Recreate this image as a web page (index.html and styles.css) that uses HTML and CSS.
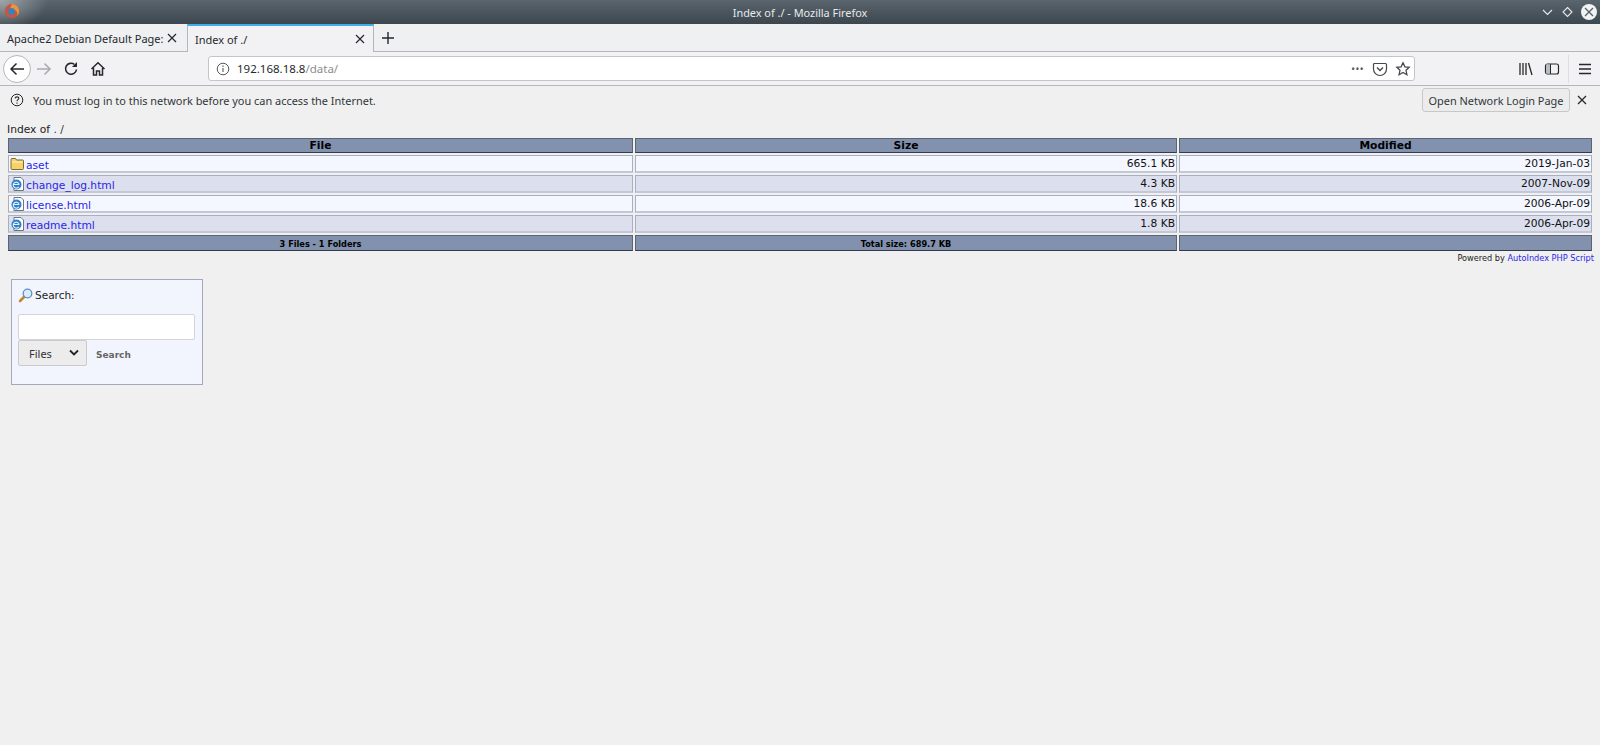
FILE: index.html
```html
<!DOCTYPE html>
<html lang="en">
<head>
  <meta charset="UTF-8" />
  <title>Index of ./ - Mozilla Firefox</title>
  <link rel="stylesheet" href="styles.css">
</head>
<body>
  <div class="titlebar">
    <svg class="ff-logo" width="16" height="16" viewBox="0 0 18 18">
      <circle cx="9" cy="9" r="8" fill="#c9553a"/>
      <path d="M9 1a8 8 0 0 1 8 8c0 2-1 4.500-2.500 5.700 1-2.400.5-5-1.500-6.500C10 7 8 7.500 7 6.500 7.500 4.500 8 2.500 9 1z" fill="#e9963a"/>
      <circle cx="8.500" cy="9.500" r="3.800" fill="#3c7fc4"/>
    </svg>
    <span class="title-text">Index of ./ - Mozilla Firefox</span>
    <div class="win-buttons">
      <svg width="13" height="12" viewBox="0 0 13 12"><path d="M2 4l4.500 4.500L11 4" fill="none" stroke="#e8eaec" stroke-width="1.100"/></svg>
      <svg width="13" height="12" viewBox="0 0 13 12"><path d="M6.500 1.500L11 6 6.500 10.500 2 6z" fill="none" stroke="#e8eaec" stroke-width="1.100"/></svg>
      <span class="win-close">
        <svg width="16" height="16" viewBox="0 0 16 16"><path d="M4 4l8 8M12 4l-8 8" stroke="#56606a" stroke-width="1.300"/></svg>
      </span>
    </div>
  </div>

  <div class="tabstrip">
    <div class="tab">
      <span class="tab-label">Apache2 Debian Default Page:</span>
      <svg class="tab-x" width="10" height="10" viewBox="0 0 10 10"><path d="M1 1l8 8M9 1L1 9" stroke="#26292c" stroke-width="1.200"/></svg>
    </div>
    <div class="tab tab-active">
      <span class="tab-label">Index of ./</span>
      <svg class="tab-x" width="10" height="10" viewBox="0 0 10 10"><path d="M1 1l8 8M9 1L1 9" stroke="#26292c" stroke-width="1.200"/></svg>
    </div>
    <svg class="tab-new" width="14" height="14" viewBox="0 0 14 14"><path d="M7 1v12M1 7h12" stroke="#26292c" stroke-width="1.400"/></svg>
  </div>

  <div class="toolbar">
    <span class="back-btn">
      <svg width="16" height="16" viewBox="0 0 16 16"><path d="M15 8H2M7.500 2.500L2 8l5.500 5.500" fill="none" stroke="#26292c" stroke-width="1.500"/></svg>
    </span>
    <svg class="tool-icon" width="16" height="16" viewBox="0 0 16 16"><path d="M1 8h13M8.500 2.500L14 8l-5.500 5.500" fill="none" stroke="#a8abaf" stroke-width="1.500"/></svg>
    <svg class="tool-icon" width="16" height="16" viewBox="0 0 16 16"><path d="M13.500 8.500a5.500 5.500 0 1 1-2-5" fill="none" stroke="#26292c" stroke-width="1.600"/><path d="M14 1v5H9z" fill="#26292c"/></svg>
    <svg class="tool-icon" width="16" height="16" viewBox="0 0 16 16"><path d="M1.500 8L8 1.800 14.500 8M3.500 7v7h3v-4h3v4h3V7" fill="none" stroke="#26292c" stroke-width="1.500"/></svg>
    <div class="urlbar">
      <svg width="14" height="14" viewBox="0 0 14 14"><circle cx="7" cy="7" r="5.800" fill="none" stroke="#55585c"/><path d="M7 6v4M7 3.600v1.300" stroke="#55585c" stroke-width="1.100"/></svg>
      <span class="url"><span class="url-host">192.168.18.8</span>/data/</span>
      <span class="url-dots">&bull;&bull;&bull;</span>
      <svg width="16" height="16" viewBox="0 0 16 16"><path d="M2.500 2.500h11a1 1 0 0 1 1 1V8a6.500 6.500 0 0 1-13 0V3.500a1 1 0 0 1 1-1z" fill="none" stroke="#45484c" stroke-width="1.200"/><path d="M5 6.500l3 3 3-3" fill="none" stroke="#45484c" stroke-width="1.400"/></svg>
      <svg width="16" height="16" viewBox="0 0 16 16"><path d="M8 1.800l1.900 4 4.300.5-3.200 3 .9 4.400L8 11.500l-3.900 2.200.9-4.400-3.200-3 4.300-.5z" fill="none" stroke="#45484c" stroke-width="1.300"/></svg>
    </div>
    <div class="toolbar-right">
      <svg width="16" height="16" viewBox="0 0 16 16"><path d="M2 2v12M5 2v12M8 2v12M10.500 2l3.500 12" fill="none" stroke="#26292c" stroke-width="1.300"/></svg>
      <svg width="16" height="16" viewBox="0 0 16 16"><rect x="1.500" y="3" width="13" height="10" rx="2" fill="none" stroke="#26292c" stroke-width="1.200"/><path d="M2 3.500h4v9H2z" fill="#b9bcc0"/><path d="M6.500 3v10" stroke="#26292c"/></svg>
      <span class="toolbar-sep"></span>
      <svg width="16" height="16" viewBox="0 0 16 16"><path d="M2 3.500h12M2 8h12M2 12.500h12" stroke="#26292c" stroke-width="1.300"/></svg>
    </div>
  </div>

  <div class="notice">
    <svg width="14" height="14" viewBox="0 0 14 14"><circle cx="7" cy="7" r="5.800" fill="none" stroke="#26292c"/><path d="M5.200 5.400C5.300 3.300 8.900 3.400 8.800 5.400 8.700 6.700 7 6.700 7 8.300M7 9.400v1.300" fill="none" stroke="#26292c" stroke-width="1.100"/></svg>
    <span class="notice-text">You must log in to this network before you can access the Internet.</span>
    <button class="notice-btn">Open Network Login Page</button>
    <svg class="notice-x" width="10" height="10" viewBox="0 0 10 10"><path d="M1 1l8 8M9 1L1 9" stroke="#26292c" stroke-width="1.300"/></svg>
  </div>

  <div class="page">
    <div class="index-title">Index of <a href="#">.</a> <a class="dark" href="#">/</a></div>
    <table class="listing">
      <tr class="head">
        <th class="col-file">File</th>
        <th class="col-size">Size</th>
        <th class="col-mod">Modified</th>
      </tr>
      <tr class="light">
        <td class="name"><svg class="file-icon" width="15" height="14" viewBox="0 0 15 14"><path d="M1 3.500V2.500a1 1 0 0 1 1-1h3.500l1 1.500h6a1 1 0 0 1 1 1v7.500a1 1 0 0 1-1 1H2a1 1 0 0 1-1-1z" fill="#f5d36a" stroke="#7d6a32"/><path d="M2 5h11" stroke="#fdf3c4"/></svg><a href="#">aset</a></td>
        <td class="num">665.1 KB</td>
        <td class="num">2019-Jan-03</td>
      </tr>
      <tr class="dark-row">
        <td class="name"><svg class="file-icon" width="15" height="14" viewBox="0 0 15 14"><path d="M4 .5h7l2.500 2.500v10.500H4z" fill="#fff" stroke="#6c7480"/><circle cx="6.500" cy="7.500" r="5" fill="#2f7fc9"/><path d="M3.800 7.500h5.400M8.800 9.800a3 3 0 1 1 .4-2.300" fill="none" stroke="#e6f2fc" stroke-width="1.100"/></svg><a href="#">change_log.html</a></td>
        <td class="num">4.3 KB</td>
        <td class="num">2007-Nov-09</td>
      </tr>
      <tr class="light">
        <td class="name"><svg class="file-icon" width="15" height="14" viewBox="0 0 15 14"><path d="M4 .5h7l2.500 2.500v10.500H4z" fill="#fff" stroke="#6c7480"/><circle cx="6.500" cy="7.500" r="5" fill="#2f7fc9"/><path d="M3.800 7.500h5.400M8.800 9.800a3 3 0 1 1 .4-2.300" fill="none" stroke="#e6f2fc" stroke-width="1.100"/></svg><a href="#">license.html</a></td>
        <td class="num">18.6 KB</td>
        <td class="num">2006-Apr-09</td>
      </tr>
      <tr class="dark-row">
        <td class="name"><svg class="file-icon" width="15" height="14" viewBox="0 0 15 14"><path d="M4 .5h7l2.500 2.500v10.500H4z" fill="#fff" stroke="#6c7480"/><circle cx="6.500" cy="7.500" r="5" fill="#2f7fc9"/><path d="M3.800 7.500h5.400M8.800 9.800a3 3 0 1 1 .4-2.300" fill="none" stroke="#e6f2fc" stroke-width="1.100"/></svg><a href="#">readme.html</a></td>
        <td class="num">1.8 KB</td>
        <td class="num">2006-Apr-09</td>
      </tr>
      <tr class="foot">
        <th>3 Files - 1 Folders</th>
        <th>Total size: 689.7 KB</th>
        <th></th>
      </tr>
    </table>
    <div class="powered">Powered by <a href="#">AutoIndex PHP Script</a></div>

    <div class="search-box">
      <div class="search-label">
        <svg width="15" height="15" viewBox="0 0 15 15"><path d="M6.500 8.500L2 13" stroke="#c8833a" stroke-width="2.600" stroke-linecap="round"/><circle cx="9.500" cy="5.500" r="4.300" fill="#d8ecfb" stroke="#5f8fc0" stroke-width="1.300"/></svg>
        <span>Search:</span>
      </div>
      <div class="search-input"></div>
      <div class="search-row">
        <div class="search-select">
          <span>Files</span>
          <svg width="10" height="8" viewBox="0 0 10 8"><path d="M1 1.500l4 4 4-4" fill="none" stroke="#222" stroke-width="1.800"/></svg>
        </div>
        <span class="search-btn">Search</span>
      </div>
    </div>
  </div>
</body>
</html>
```

FILE: styles.css
```css
* {
  margin: 0;
  padding: 0;
  box-sizing: border-box;
}

body {
  width: 1600px;
  height: 745px;
  overflow: hidden;
  background-color: #f0f0f0;
  font-family: "Noto Sans", sans-serif;
  color: #26292c;
}

a {
  color: #2a1fe8;
  text-decoration: none;
}

/* window title */
.titlebar {
  position: relative;
  height: 24px;
  display: flex;
  align-items: center;
  justify-content: center;
  background: radial-gradient(ellipse 48px 30px at 0 0, rgba(190, 195, 198, 0.7), rgba(190, 195, 198, 0)), linear-gradient(#5a656e, #3c464e);
  color: #e8eaec;
  font-size: 10.9px;
}

.ff-logo {
  position: absolute;
  left: 4px;
  top: 3px;
}

.win-buttons {
  position: absolute;
  right: 3px;
  top: 4px;
  display: flex;
  align-items: center;
  gap: 7px;
}

.win-close {
  width: 16px;
  height: 16px;
  border-radius: 50%;
  background-color: #f1f2f3;
  display: flex;
}

/* tabs */
.tabstrip {
  height: 28px;
  display: flex;
  align-items: stretch;
  background-color: #eff0f2;
  border-bottom: 1px solid #b4b6b9;
  font-size: 11px;
}

.tab {
  width: 187px;
  display: flex;
  align-items: center;
  justify-content: space-between;
  padding: 1px 10px 0 7px;
}

.tab-label {
  white-space: nowrap;
}

.tab-active {
  background-color: #f2f2f4;
  border-top: 2px solid #3daee9;
  border-left: 1px solid #b4b6b9;
  border-right: 1px solid #b4b6b9;
  margin-bottom: -1px;
  padding: 0 8px 0 7px;
}

.tab-x {
  flex-shrink: 0;
}

.tab-new {
  align-self: center;
  margin-left: 7px;
}

/* navigation */
.toolbar {
  height: 34px;
  display: flex;
  align-items: center;
  padding: 0 0 0 3px;
  background-color: #f2f2f4;
  border-bottom: 1px solid #b4b6b9;
}

.back-btn {
  width: 28px;
  height: 28px;
  border-radius: 50%;
  border: 1px solid #b4b6b9;
  background-color: #fff;
  display: flex;
  align-items: center;
  justify-content: center;
  margin-right: 5px;
}

.tool-icon {
  margin-right: 11px;
}

.urlbar {
  width: 1207px;
  height: 25px;
  margin-left: 91px;
  padding: 0 3px 0 7px;
  display: flex;
  align-items: center;
  gap: 7px;
  background-color: #fff;
  border: 1px solid #c3c5c8;
  border-radius: 3px;
}

.url {
  flex: 1;
  font-size: 11.5px;
  color: #8a8d91;
}

.url-host {
  color: #26292c;
}

.url-dots {
  font-size: 10px;
  letter-spacing: 0.5px;
  color: #55585c;
  margin-right: 1px;
}

.toolbar-right {
  display: flex;
  align-items: center;
  gap: 10px;
  margin-left: 103px;
}

.toolbar-sep {
  width: 1px;
  height: 28px;
  background-color: #dcdde0;
  margin: 0 -2px;
}

/* captive portal bar */
.notice {
  height: 30px;
  display: flex;
  align-items: center;
  padding: 0 13px 2px 10px;
  font-size: 10.95px;
  background-color: #f0f0f0;
}

.notice-text {
  flex: 1;
  margin-left: 9px;
  color: #31363b;
}

.notice-btn {
  width: 148px;
  height: 24px;
  font-family: "Noto Sans", sans-serif;
  font-size: 10.95px;
  color: #31363b;
  background-color: #ececec;
  border: 1px solid #c6c8ca;
  border-radius: 3px;
}

.notice-x {
  margin-left: 7px;
}

/* directory listing */
.page {
  padding: 7px 6px 0 7px;
}

.index-title {
  font-family: "DejaVu Sans", sans-serif;
  font-size: 10.7px;
  line-height: 13px;
  height: 13px;
  color: #222;
}

.index-title .dark {
  color: #333;
}

.listing {
  width: 1588px;
  margin-left: -1px;
  table-layout: fixed;
  border-collapse: separate;
  border-spacing: 2px;
  font-family: "DejaVu Sans", sans-serif;
  font-size: 10.7px;
}

.listing th {
  background-color: #8291ae;
  border: 1px solid #5b6472;
  border-bottom-color: #333c4c;
  color: #000;
  padding: 0;
  line-height: 13px;
}

.head th {
  height: 15px;
}

.col-file {
  width: 625px;
}

.col-size {
  width: 542px;
}

.listing td {
  height: 18px;
  padding: 0 1px;
  border: 1px solid #a9aec0;
  border-bottom-width: 2px;
  border-bottom-color: #c3c7d6;
  color: #111;
  white-space: nowrap;
  line-height: 12px;
}

.listing .name {
  padding-top: 1px;
  line-height: 11px;
}

.listing td a {
  vertical-align: -3px;
}

.light td {
  background-color: #f4f7ff;
}

.dark-row td {
  background-color: #dbdfee;
}

.num {
  text-align: right;
}

.file-icon {
  vertical-align: top;
  margin-right: 1px;
}

.listing .foot th {
  height: 16px;
  padding-top: 1px;
  line-height: 12px;
  font-size: 8.2px;
}

.powered {
  margin-top: -1px;
  text-align: right;
  font-family: "DejaVu Sans", sans-serif;
  font-size: 8.2px;
  line-height: 12px;
  color: #222;
}

/* search */
.search-box {
  width: 192px;
  height: 106px;
  margin: 15px 0 0 4px;
  padding: 6px 6px;
  background-color: #f2f5fd;
  border: 1px solid #a2a9bb;
}

.search-label {
  display: flex;
  align-items: center;
  gap: 2px;
  height: 18px;
  font-family: "DejaVu Sans", sans-serif;
  font-size: 10.5px;
  color: #222;
}

.search-input {
  width: 177px;
  height: 26px;
  margin-top: 10px;
  background-color: #fff;
  border: 1px solid #d4d5d8;
  border-radius: 2px;
}

.search-row {
  display: flex;
  align-items: center;
}

.search-select {
  width: 69px;
  height: 26px;
  padding: 0 7px 0 10px;
  display: flex;
  align-items: center;
  justify-content: space-between;
  background-color: #ececec;
  border: 1px solid #c9cbce;
  border-radius: 2px;
  font-size: 11px;
  color: #333;
}

.search-btn {
  margin: 4px 0 0 9px;
  font-family: "DejaVu Sans", sans-serif;
  font-size: 9px;
  font-weight: bold;
  color: #666;
}
```
